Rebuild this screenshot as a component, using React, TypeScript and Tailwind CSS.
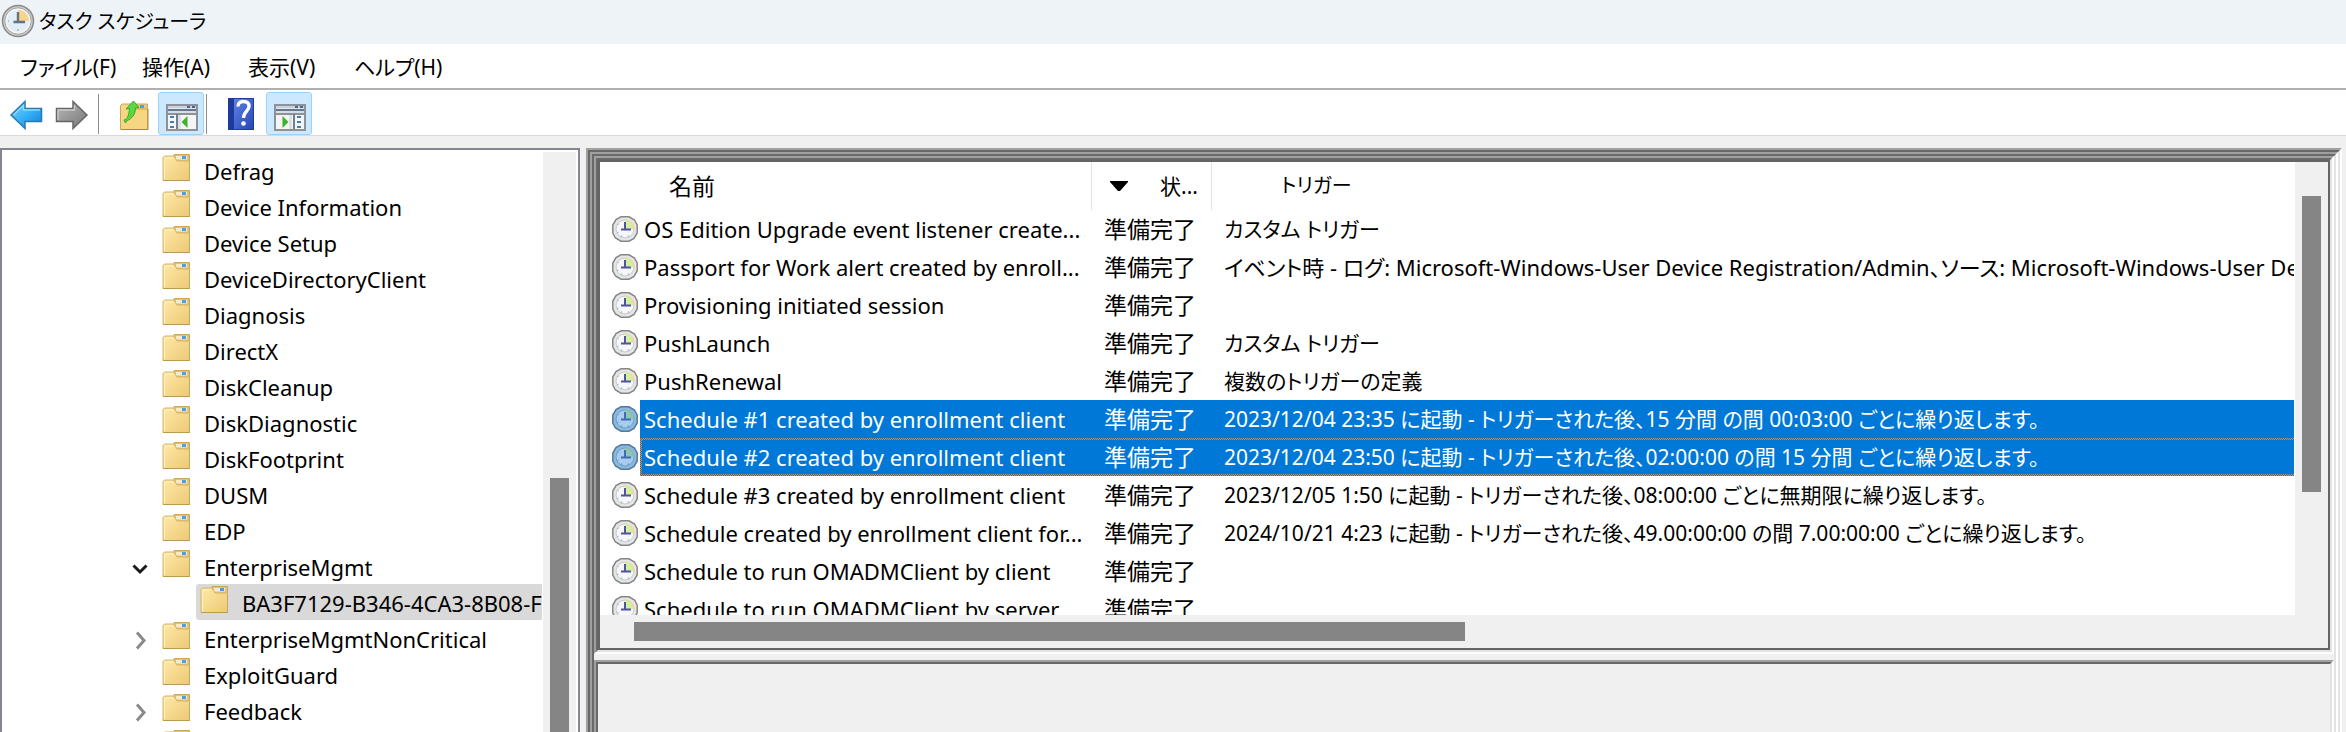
import type { ReactNode } from "react";

type TreeItem = { name: string; state?: "open" | "closed"; child?: boolean; selected?: boolean };
type Task = { name: string; trigger?: string; wide?: boolean; selected?: boolean; focused?: boolean };

const TREE: TreeItem[] = [
  { name: "Defrag" },
  { name: "Device Information" },
  { name: "Device Setup" },
  { name: "DeviceDirectoryClient" },
  { name: "Diagnosis" },
  { name: "DirectX" },
  { name: "DiskCleanup" },
  { name: "DiskDiagnostic" },
  { name: "DiskFootprint" },
  { name: "DUSM" },
  { name: "EDP" },
  { name: "EnterpriseMgmt", state: "open" },
  { name: "BA3F7129-B346-4CA3-8B08-F", child: true, selected: true },
  { name: "EnterpriseMgmtNonCritical", state: "closed" },
  { name: "ExploitGuard" },
  { name: "Feedback", state: "closed" },
  { name: "" },
];

const TASKS: Task[] = [
  { name: "OS Edition Upgrade event listener create...", trigger: "カスタム トリガー" },
  {
    name: "Passport for Work alert created by enroll...",
    trigger: "イベント時 - ログ: Microsoft-Windows-User Device Registration/Admin、ソース: Microsoft-Windows-User De",
    wide: true,
  },
  { name: "Provisioning initiated session" },
  { name: "PushLaunch", trigger: "カスタム トリガー" },
  { name: "PushRenewal", trigger: "複数のトリガーの定義" },
  {
    name: "Schedule #1 created by enrollment client",
    trigger: "2023/12/04 23:35 に起動 - トリガーされた後、15 分間 の間 00:03:00 ごとに繰り返します。",
    selected: true,
  },
  {
    name: "Schedule #2 created by enrollment client",
    trigger: "2023/12/04 23:50 に起動 - トリガーされた後、02:00:00 の間 15 分間 ごとに繰り返します。",
    selected: true,
    focused: true,
  },
  {
    name: "Schedule #3 created by enrollment client",
    trigger: "2023/12/05 1:50 に起動 - トリガーされた後、08:00:00 ごとに無期限に繰り返します。",
  },
  {
    name: "Schedule created by enrollment client for...",
    trigger: "2024/10/21 4:23 に起動 - トリガーされた後、49.00:00:00 の間 7.00:00:00 ごとに繰り返します。",
  },
  { name: "Schedule to run OMADMClient by client" },
  { name: "Schedule to run OMADMClient by server" },
];

const MENUS = ["ファイル(F)", "操作(A)", "表示(V)", "ヘルプ(H)"];

function AppClock() {
  return (
    <svg width="34" height="34" viewBox="0 0 34 34" aria-hidden="true">
      <circle cx="17" cy="17" r="15.5" fill="#c9cbcc" stroke="#8b8b8a" strokeWidth="1.5" />
      <circle cx="17" cy="17" r="13.2" fill="#f4f5f5" stroke="#a3a5a7" strokeWidth="1" />
      <circle cx="17" cy="17" r="11" fill="#e3edf6" />
      <path d="M17 17V6a11 11 0 0 1 11 11Z" fill="#f6d68c" />
      <path d="M17 8V18M12.500 18H24" stroke="#66727f" strokeWidth="2.400" fill="none" />
      <path d="M17 25v2M8 17h-1" stroke="#a9b4bf" strokeWidth="1.500" />
    </svg>
  );
}

function TaskClock({ selected }: { selected?: boolean }) {
  const rim = selected ? "#54799b" : "#868686";
  const ring = selected ? "#8bb9df" : "#e6e6e6";
  const face = selected ? "#a8cdee" : "#f7f7f9";
  const wedge = selected ? "#8cc8b0" : "#cdf49a";
  const edge = selected ? "#90b9b5" : "#f4d6a4";
  const hand = selected ? "#3f6cb8" : "#5450a4";
  return (
    <svg width="26" height="26" viewBox="0 0 26 26" className="shrink-0" aria-hidden="true">
      <path d="M9 .8h8L22.500 4 25.200 9v8L22 22.500 17 25.200H9L3.500 22 .8 17V9L4 3.500Z" fill={ring} stroke={rim} strokeWidth="1.500" />
      <circle cx="13" cy="13" r="9" fill={face} stroke={selected ? "#6f9fc6" : "#c4cbd0"} strokeWidth="1" />
      <path d="M13 13V3.500a9.500 9.500 0 0 1 9.500 9.500Z" fill={edge} />
      <path d="M13 13V4l5 2 3 7Z" fill={wedge} />
      <path d="M13 6v8M9 13.500h10" stroke={hand} strokeWidth="2" fill="none" />
      <path d="M5 8l1.500 1M5 17l1.500-1M9 21l1-1.500M17 21l-1-1.500" stroke={selected ? "#6d9fc9" : "#a9c6c9"} strokeWidth="1.500" />
    </svg>
  );
}

function Folder() {
  return (
    <svg width="28" height="28" viewBox="0 0 28 28" className="mt-0.5 shrink-0" aria-hidden="true">
      <defs>
        <linearGradient id="folder" x1="0" y1="0" x2="1" y2="1">
          <stop offset="0" stopColor="#ffe9a6" />
          <stop offset="1" stopColor="#ecc976" />
        </linearGradient>
      </defs>
      <path d="M12 .5H27.500V8H12Z" fill="#e4c27a" stroke="#cba65c" />
      <rect x="14" y="2" width="11" height="3.500" fill="#f3ead0" />
      <rect x="20" y="2" width="4" height="3" fill="#4f9fd8" />
      <path d="M1 3.500 2.500 2H12l3 5H27.500V26.500H1Z" fill="url(#folder)" stroke="#d5b366" />
      <path d="M2.500 25V5.500L4 4h7" stroke="#fff3c6" fill="none" />
      <path d="M1 26.500H28V8" stroke="#bd9a52" fill="none" />
    </svg>
  );
}

function BackIcon() {
  return (
    <svg width="46" height="43" viewBox="0 0 46 43" aria-hidden="true">
      <defs>
        <linearGradient id="back" x1="0" y1="0" x2="1" y2="1">
          <stop offset="0" stopColor="#7fd2fb" />
          <stop offset=".5" stopColor="#35b1f6" />
          <stop offset="1" stopColor="#1380d8" />
        </linearGradient>
      </defs>
      <path d="M8 23 22 9.500V16.500H38.500V29.500H22V36.500Z" fill="url(#back)" stroke="#2a78b4" strokeWidth="1.500" />
      <path d="M10.500 23 20.500 13.500V18H37" fill="none" stroke="#8fdcff" strokeWidth="1.300" />
    </svg>
  );
}

function ForwardIcon() {
  return (
    <svg width="46" height="43" viewBox="0 0 46 43" aria-hidden="true">
      <defs>
        <linearGradient id="fwd" x1="0" y1="0" x2="1" y2="1">
          <stop offset="0" stopColor="#b8b8b8" />
          <stop offset="1" stopColor="#777777" />
        </linearGradient>
      </defs>
      <path d="M38 23 24 9.500V16.500H7.500V29.500H24V36.500Z" fill="url(#fwd)" stroke="#666666" strokeWidth="1.500" />
      <path d="M9 28V18H25.500V13" fill="none" stroke="#c9c9c9" strokeWidth="1.300" />
    </svg>
  );
}

function FolderUpIcon() {
  return (
    <svg width="46" height="43" viewBox="0 0 46 43" aria-hidden="true">
      <path d="M24 12H36.500V18H24Z" fill="#e8c983" stroke="#cba65c" />
      <rect x="29" y="13" width="4" height="3" fill="#4f9fd8" />
      <path d="M9.500 13.500 11 12H20L22 17H36.500V37.500H9.500Z" fill="#f6d583" stroke="#c9a75c" />
      <path d="M10 37.500H37V17" fill="none" stroke="#a98743" />
      <path d="M13 28C17 27 18 22 18.500 16.500L15 17 22.500 9 28 15.500 24.500 16C24.500 22 21 27 16 28.500L14.500 31Z" fill="#5fd63f" stroke="#3aa827" />
    </svg>
  );
}

function PaneIcon({ side }: { side: "left" | "right" }) {
  const left = side === "left";
  const dash = left ? 12 : 31;
  return (
    <svg width="44" height="41" viewBox="1 1 44 41" aria-hidden="true">
      <rect x="9" y="13" width="30" height="25" fill="#f5f5f5" stroke="#8b929b" strokeWidth="2" />
      <rect x="10" y="14" width="28" height="2" fill="#c9d2dc" />
      <rect x="10" y="16" width="28" height="3" fill="#dfe5ec" />
      <rect x="10" y="17" width="28" height="2" fill="#66788f" />
      <rect x="29" y="14" width="3" height="2" fill="#4c6584" />
      <rect x="34" y="14" width="3" height="2" fill="#4c6584" />
      <rect x="10" y="19" width="28" height="2" fill="#d8dde3" />
      <rect x="8" y="21" width="32" height="2" fill="#8b929b" />
      <rect x={left ? 18 : 27} y="22" width="2" height="15" fill="#6f7f93" />
      <rect x={left ? 20 : 23} y="23" width="3" height="14" fill="#dde0e4" />
      {[24, 29, 34].map((y) => (
        <rect key={y} x={dash} y={y} width="4" height="2" fill="#3f7fb8" />
      ))}
      <path d={left ? "M29.500 24V36L23.500 30Z" : "M16.500 24V36L22.500 30Z"} fill="#3fb22c" />
    </svg>
  );
}

function HelpIcon() {
  return (
    <svg width="46" height="43" viewBox="0 0 46 43" aria-hidden="true">
      <defs>
        <linearGradient id="help" x1="0" y1="0" x2="1" y2="1">
          <stop offset="0" stopColor="#5f83e0" />
          <stop offset="1" stopColor="#2746b8" />
        </linearGradient>
      </defs>
      <rect x="10" y="6" width="26" height="32" fill="#1d3b9f" />
      <rect x="16" y="7" width="19" height="30" fill="url(#help)" />
      <path d="M20 14.500C20 10.500 23 9.500 25.500 9.500C29 9.500 31 11.500 31 14.500C31 19 25.500 19.500 25.500 26" fill="none" stroke="#ffffff" strokeWidth="3.400" />
      <circle cx="25.500" cy="31.500" r="2.300" fill="#ffffff" />
    </svg>
  );
}

function Chevron({ state }: { state?: "open" | "closed" }) {
  if (!state) return null;
  return (
    <svg width="20" height="20" viewBox="0 0 20 20" fill="none" strokeWidth="3" aria-hidden="true">
      {state === "open" ? (
        <path d="M3.500 7.500 10 14 16.500 7.500" stroke="#1b1b1b" />
      ) : (
        <path d="M7 2.500 14 10.500 7 18.500" stroke="#8a8a8a" />
      )}
    </svg>
  );
}

function Sunken({ className = "", children }: { className?: string; children?: ReactNode }) {
  return (
    <div className={"flex flex-col border-2 border-t-[#a0a0a0] border-r-white border-b-white border-l-[#a0a0a0] " + className}>
      <div className="flex min-h-0 flex-1 flex-col border-2 border-t-[#696969] border-r-[#e3e3e3] border-b-[#e3e3e3] border-l-[#696969]">
        {children}
      </div>
    </div>
  );
}

function Cell({ task, first, className = "", children }: { task: Task; first?: boolean; className?: string; children?: ReactNode }) {
  const tone = task.selected ? "bg-[#0078d7] text-white " : "";
  if (task.focused) {
    return (
      <div
        className={
          "min-w-0 flex-1 bg-[repeating-conic-gradient(#f78728_0_25%,#0078d7_0_50%)] bg-[length:2px_2px] py-0.5 " +
          (first ? "pl-0.5" : "")
        }
      >
        <div className={"h-[34px] leading-[34px] whitespace-nowrap " + tone + (first ? "pl-0.5" : className)}>{children}</div>
      </div>
    );
  }
  return (
    <div className={"h-[38px] min-w-0 flex-1 leading-[38px] whitespace-nowrap " + tone + (first ? "pl-1" : className)}>{children}</div>
  );
}

function ToolButton({ label, active, children }: { label: string; active?: boolean; children: ReactNode }) {
  return (
    <button
      type="button"
      aria-label={label}
      className={
        "flex h-[43px] w-[46px] items-center justify-center " + (active ? "rounded-[3px] border border-[#99d1ff] bg-[#cce8ff]" : "")
      }
    >
      {children}
    </button>
  );
}

export default function App() {
  return (
    <div
      lang="ja"
      className="flex h-screen flex-col overflow-hidden bg-[#f0f0f0] font-['Noto_Sans','Noto_Sans_CJK_JP',sans-serif] text-[22px] text-black [font-feature-settings:'palt']"
    >
      <header className="flex h-11 shrink-0 items-center gap-1 bg-[#eef3f8] px-px pb-0.5">
        <AppClock />
        <h1 className="pt-0.5 text-[20px] leading-8">タスク スケジューラ</h1>
      </header>

      <nav className="flex h-11 shrink-0 items-center bg-white pt-1 pl-5">
        {MENUS.map((m, i) => (
          <button key={m} type="button" className={"h-10 text-left text-[21px] whitespace-nowrap " + (i === 0 ? "w-[122px]" : "w-[106px]")}>
            {m}
          </button>
        ))}
      </nav>

      <div role="toolbar" className="flex h-12 shrink-0 items-start border-t-2 border-b border-t-[#b0b0b0] border-b-[#dadada] bg-white pt-0.5 pl-[3px]">
        <ToolButton label="戻る"><BackIcon /></ToolButton>
        <ToolButton label="進む"><ForwardIcon /></ToolButton>
        <div className="mt-0.5 mr-3 ml-[3px] h-10 w-px bg-[#8c8c8c]" />
        <ToolButton label="上へ"><FolderUpIcon /></ToolButton>
        <div className="w-px" />
        <ToolButton label="コンソール ツリー" active><PaneIcon side="left" /></ToolButton>
        <div className="mt-0.5 mr-[11px] ml-0.5 h-10 w-px bg-[#8c8c8c]" />
        <ToolButton label="ヘルプ"><HelpIcon /></ToolButton>
        <div className="w-0.5" />
        <ToolButton label="操作ウィンドウ" active><PaneIcon side="right" /></ToolButton>
      </div>

      <main className="flex min-h-0 flex-1 gap-1.5 pt-3 pr-1">
        <aside className="-mb-1 flex w-[580px] shrink-0 border-2 border-[#828790] bg-white pt-0.5 pr-0.5">
          <ul role="tree" className="min-w-0 flex-1 overflow-hidden">
            {TREE.map((item, i) => (
              <li
                key={i}
                role="treeitem"
                aria-selected={!!item.selected}
                className={"flex h-9 " + (item.child ? "mr-px ml-[194px] rounded-l-[3px] bg-[#d9d9d9] pl-1" : "pl-32")}
              >
                {!item.child && (
                  <span className="flex w-8 shrink-0 items-center pt-1">
                    <Chevron state={item.state} />
                  </span>
                )}
                <Folder />
                <span className="ml-3.5 overflow-hidden pt-px leading-9 whitespace-nowrap">{item.name}</span>
              </li>
            ))}
          </ul>
          <div className="flex w-[33px] shrink-0 flex-col items-center bg-[#f0f0f0] pt-[326px]">
            <div className="w-[19px] flex-1 bg-[#858585]" />
          </div>
        </aside>

        <Sunken className="-mb-3 min-w-0 flex-1">
          <Sunken className="min-h-0 flex-1">
            <Sunken className="h-[498px] shrink-0">
              <section className="grid min-h-0 flex-1 grid-cols-[minmax(0,1fr)_33px] grid-rows-[minmax(0,1fr)_33px] border-2 border-[#646464] bg-[#f0f0f0]">
                <div className="overflow-hidden bg-white">
                  <table className="w-full table-fixed border-collapse">
                    <colgroup>
                      <col className="w-[492px]" />
                      <col className="w-[120px]" />
                      <col />
                    </colgroup>
                    <thead>
                      <tr className="h-12 text-left leading-[48px]">
                        <th className="p-0 font-normal">
                          <div className="h-12 border-r border-[#e2e2e2] pl-[69px] text-[23px]">名前</div>
                        </th>
                        <th className="p-0 font-normal">
                          <div className="flex h-12 items-center border-r border-[#e2e2e2] pl-[18px]">
                            <svg width="18" height="10" viewBox="0 0 18 10" className="mr-8" aria-hidden="true">
                              <path d="M0 0H18V1L10 10H8L0 1Z" fill="#000000" />
                            </svg>
                            <span className="text-[21px] whitespace-nowrap">状...</span>
                          </div>
                        </th>
                        <th className="p-0 font-normal">
                          <div className="h-12 pl-[69px] text-[20px]">トリガー</div>
                        </th>
                      </tr>
                    </thead>
                    <tbody>
                      {TASKS.map((task) => (
                        <tr key={task.name} className="h-[38px]" aria-selected={!!task.selected}>
                          <td className="p-0">
                            <div className="flex h-[38px] items-center">
                              <span className="w-10 shrink-0 pl-3">
                                <TaskClock selected={task.selected} />
                              </span>
                              <Cell task={task} first>{task.name}</Cell>
                            </div>
                          </td>
                          <td className="p-0">
                            <Cell task={task} className="pl-3 text-[23px]">準備完了</Cell>
                          </td>
                          <td className="p-0">
                            <div className="mr-px overflow-hidden">
                              <Cell task={task} className={"pl-3 " + (task.wide ? "" : "text-[21px]")}>{task.trigger}</Cell>
                            </div>
                          </td>
                        </tr>
                      ))}
                    </tbody>
                  </table>
                </div>
                <div className="flex flex-col items-center pt-[34px]">
                  <div className="h-[296px] w-[19px] bg-[#858585]" />
                </div>
                <div className="flex items-center pl-[34px]">
                  <div className="h-[19px] w-1/2 bg-[#858585]" />
                </div>
                <div />
              </section>
            </Sunken>
            <div className="h-1.5 shrink-0" />
            <Sunken className="min-h-0 flex-1" />
          </Sunken>
        </Sunken>
      </main>
    </div>
  );
}
